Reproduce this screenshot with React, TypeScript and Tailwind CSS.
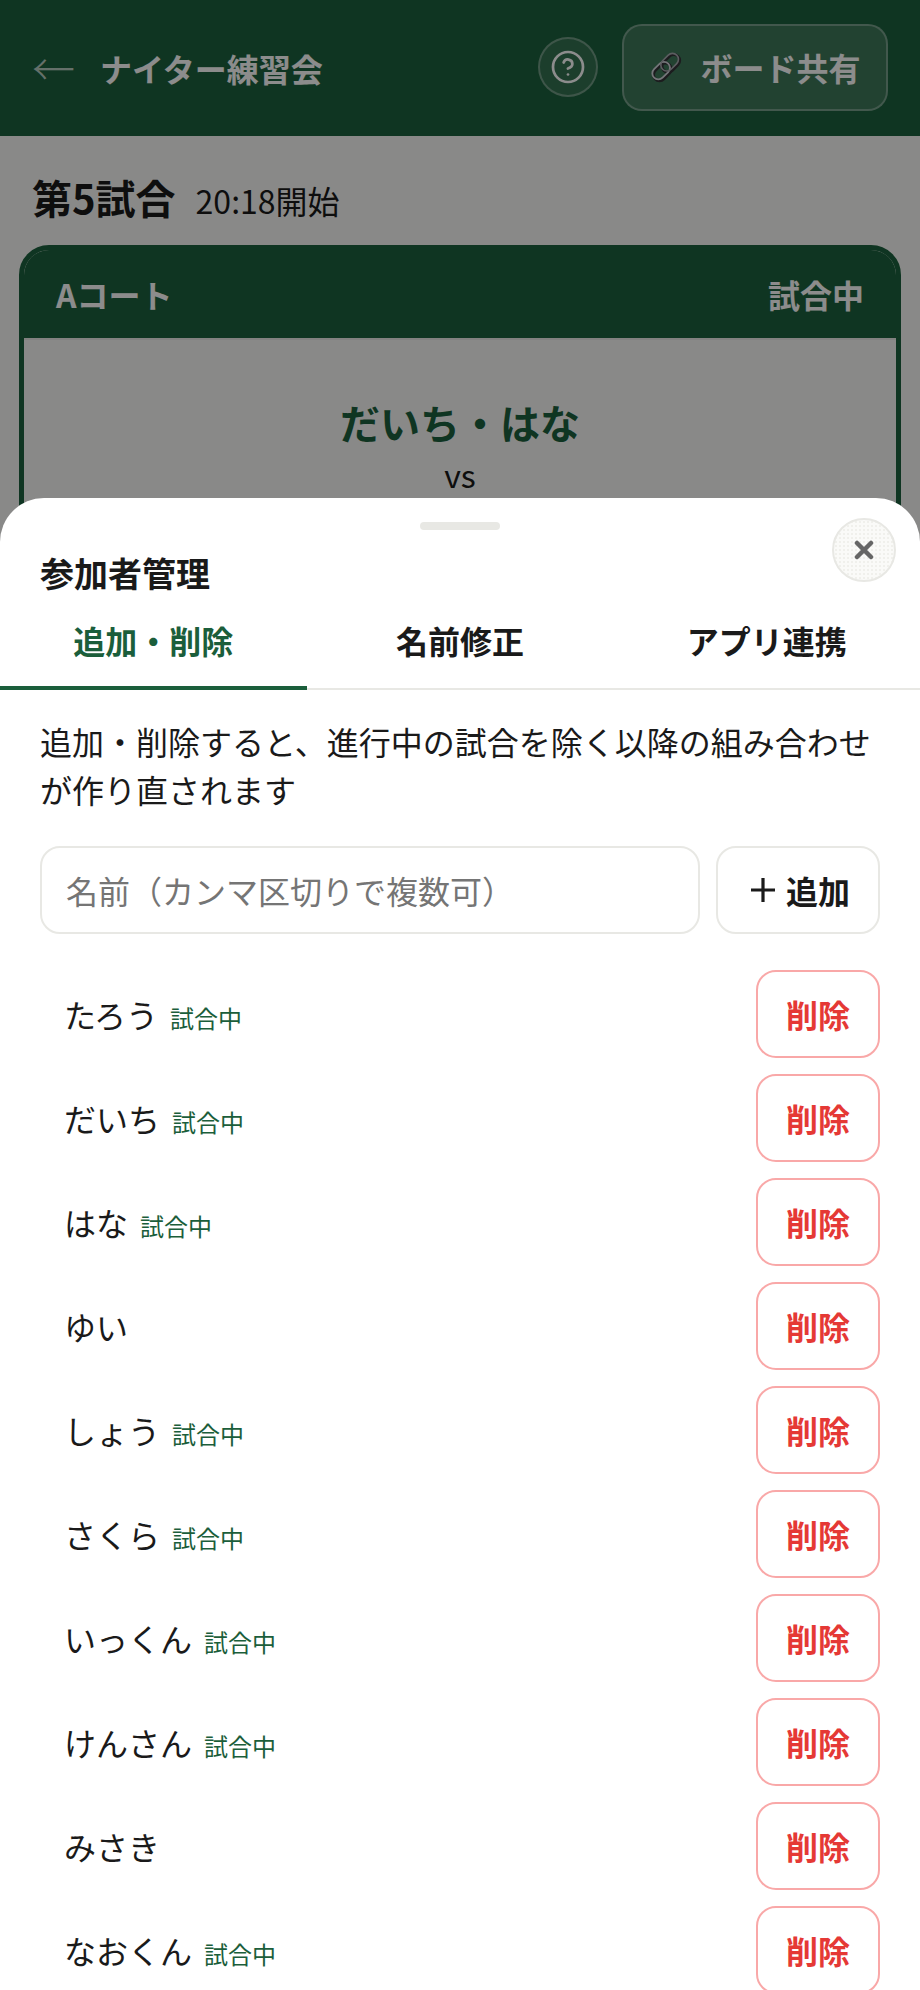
import { CircleHelp } from "lucide-react";

const font = "font-['Noto_Sans_CJK_JP','Noto_Sans',sans-serif]";

const players = [
  { name: "たろう", playing: true },
  { name: "だいち", playing: true },
  { name: "はな", playing: true },
  { name: "ゆい", playing: false },
  { name: "しょう", playing: true },
  { name: "さくら", playing: true },
  { name: "いっくん", playing: true },
  { name: "けんさん", playing: true },
  { name: "みさき", playing: false },
  { name: "なおくん", playing: true },
];

function LinkIcon() {
  return (
    <svg width="34" height="34" viewBox="0 0 34 34" fill="none">
      {/* dark under-ring, lighter ring on top */}
      <g transform="translate(0.6 0.6) rotate(-45 17 17)">
        <rect x="1" y="11" width="20" height="12" rx="6" stroke="#333338" strokeWidth="3" />
        <rect x="13" y="11" width="20" height="12" rx="6" stroke="#333338" strokeWidth="3" />
      </g>
      <g transform="translate(-0.6 -0.6) rotate(-45 17 17)">
        <rect x="1" y="11" width="20" height="12" rx="6" stroke="#d4d6dc" strokeWidth="1.8" />
        <rect x="13" y="11" width="20" height="12" rx="6" stroke="#a8aab0" strokeWidth="1.6" />
      </g>
    </svg>
  );
}

function Header() {
  return (
    <header className="h-[136px] bg-[#1d623e] flex items-center pl-[32px] pr-[32px]">
      <span className="text-white/70 text-[43px] leading-none font-light -mt-[2px]">←</span>
      <h1 className="ml-[25px] text-white text-[32px] font-bold">ナイター練習会</h1>
      <div className="ml-auto flex items-center gap-[24px] -mt-[2px]">
        <button className="w-[60px] h-[60px] rounded-full border-[2px] border-white/30 bg-white/10 flex items-center justify-center text-white">
          <CircleHelp size={36} strokeWidth={1.8} />
        </button>
        <button className="w-[266px] h-[87px] rounded-[20px] border-[2px] border-white/30 bg-white/15 flex items-center justify-center gap-[17px] text-white text-[32px] font-bold">
          <LinkIcon />
          ボード共有
        </button>
      </div>
    </header>
  );
}

function MatchBoard() {
  return (
    <main className="px-[19px]">
      <div className="pl-[13px] pt-[31px] h-[109px] flex items-baseline gap-[20px] text-[#1a1a1a]">
        <span className="text-[40px] font-bold leading-[60px]">第5試合</span>
        <span className="text-[32px] leading-[46px]">20:18開始</span>
      </div>
      <section className="rounded-[30px] border-[5px] border-[#1d623e] overflow-hidden">
        <div className="h-[88px] bg-[#1d623e] flex items-center justify-between px-[32px] text-white text-[32px] font-bold">
          <span>Aコート</span>
          <span>試合中</span>
        </div>
        <div className="h-[300px] pt-[54px] border-t-[2px] border-black/5 text-center">
          <div className="text-[#1d623e] text-[40px] font-bold leading-[56px]">だいち・はな</div>
          <div className="text-[#1a1a1a] text-[32px] leading-[40px] mt-[4px]">vs</div>
        </div>
      </section>
    </main>
  );
}

function PlayerRow({ name, playing }: { name: string; playing: boolean }) {
  return (
    <li className="h-[88px] flex items-center justify-between pl-[24px]">
      <div className="flex items-baseline gap-[12px]">
        <span className="text-[32px] text-[#1a1a1a]">{name}</span>
        {playing && <span className="text-[24px] text-[#1b5e3b]">試合中</span>}
      </div>
      <button className="w-[124px] h-[88px] rounded-[20px] border-[2px] border-[#f9a8a8] text-[#e53935] text-[32px] font-bold">
        削除
      </button>
    </li>
  );
}

function ParticipantsSheet() {
  return (
    <div className="absolute left-0 right-0 top-[498px] bottom-0 bg-white rounded-t-[44px] overflow-hidden">
      <div className="w-[80px] h-[8px] rounded-full bg-[#e8e8e4] mx-auto mt-[24px]" />
      <button className="absolute top-[20px] right-[24px] w-[64px] h-[64px] rounded-full border-[2px] border-[#e8e8e4] bg-[#fafaf8] bg-[radial-gradient(#f0f0ec_1px,transparent_1px)] bg-[length:4px_4px] flex items-center justify-center">
        <svg width="20" height="20" viewBox="0 0 20 20">
          <path d="M3 3L17 17M17 3L3 17" stroke="#666" strokeWidth="4.5" strokeLinecap="round" />
        </svg>
      </button>
      <h2 className="ml-[40px] mt-[18px] text-[34px] font-bold leading-[50px] text-[#1a1a1a]">参加者管理</h2>
      <nav className="grid grid-cols-3 h-[80px] mt-[12px] border-b-[2px] border-[#e8e8e4] text-[32px] font-bold text-[#1a1a1a]">
        <div className="flex items-center justify-center border-b-[4px] border-[#1b5e3b] text-[#1b5e3b] h-[80px] pb-[16px]">追加・削除</div>
        <div className="flex items-center justify-center pb-[20px]">名前修正</div>
        <div className="flex items-center justify-center pb-[20px]">アプリ連携</div>
      </nav>
      <div className="px-[40px]">
        <p className="mt-[27px] text-[32px] leading-[48px] text-[#1a1a1a]">
          追加・削除すると、進行中の試合を除く以降の組み合わせが作り直されます
        </p>
        <div className="mt-[33px] flex gap-[16px]">
          <input
            placeholder="名前（カンマ区切りで複数可）"
            className="w-[660px] h-[88px] rounded-[20px] border-[2px] border-[#e8e8e4] px-[24px] text-[32px] outline-none placeholder:text-[#757575]"
          />
          <button className="w-[164px] h-[88px] rounded-[20px] border-[2px] border-[#e8e8e4] pl-[4px] flex items-center justify-center gap-[10px] text-[#1a1a1a] text-[32px] font-bold">
            <svg width="26" height="26" viewBox="0 0 26 26">
              <path d="M13 1V25M1 13H25" stroke="#1a1a1a" strokeWidth="3.2" />
            </svg>
            追加
          </button>
        </div>
        <ul className="mt-[36px] flex flex-col gap-[16px]">
          {players.map((p) => (
            <PlayerRow key={p.name} name={p.name} playing={p.playing} />
          ))}
        </ul>
      </div>
    </div>
  );
}

export default function App() {
  return (
    <div className={`relative w-[920px] h-[1990px] overflow-hidden bg-[#fafaf8] ${font}`}>
      <Header />
      <MatchBoard />
      <div className="absolute inset-0 bg-black/45" />
      <ParticipantsSheet />
    </div>
  );
}
